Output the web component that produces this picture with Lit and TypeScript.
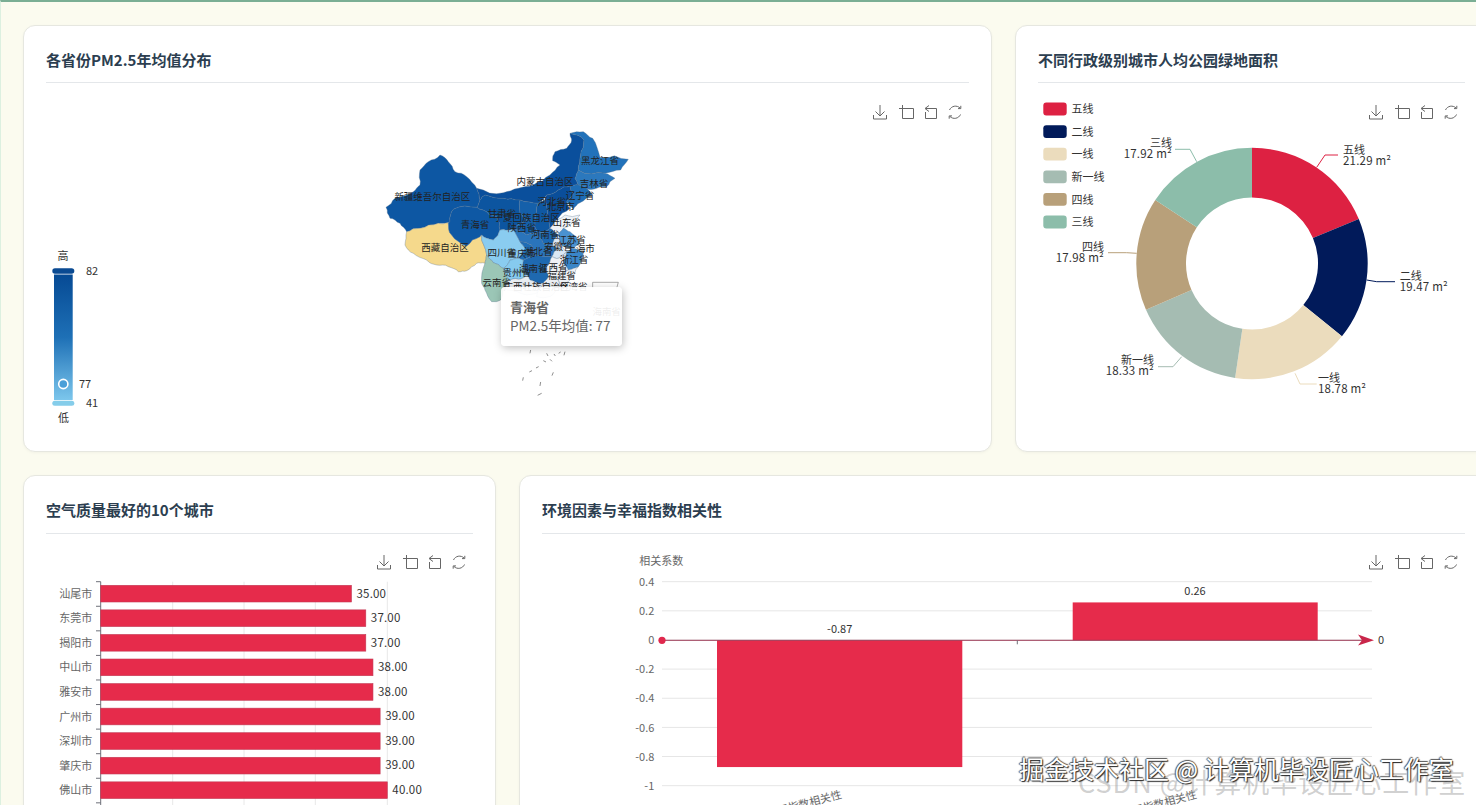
import { LitElement, html, svg, css } from "lit";
import { customElement } from "lit/decorators.js";

const RED = "#e62b4b";

// outlines traced at 3x, the group below scales them back down
const provinces: [string, string][] = [
  ["#0d57a3", "48,262 75,235 105,228 130,215 150,195 150,150 175,125 210,105 235,125 255,155 290,170 320,205 330,240 320,262 250,268 240,305 205,310 150,325 110,335 90,310 60,295"],
  ["#f5d98c", "110,335 150,325 205,310 235,308 245,345 290,378 330,350 335,345 350,405 345,430 320,430 290,452 265,455 235,440 200,435 170,420 130,400 105,375"],
  ["#0e58a4", "250,268 320,262 340,270 380,290 390,330 370,360 335,345 330,350 290,378 245,345 235,308 240,305"],
  ["#0a4f9c", "320,205 400,218 445,205 490,195 540,165 570,135 548,122 555,95 590,85 605,60 600,40 642,60 632,105 625,150 615,175 625,195 600,198 565,210 530,225 505,250 450,240 400,235 345,225 330,240"],
  ["#2272ba", "600,40 640,35 668,55 690,112 775,118 752,150 705,160 625,150 632,105 642,60"],
  ["#2b78bd", "625,150 705,160 735,175 710,200 680,205 650,205 625,195 615,175"],
  ["#1f6db5", "600,198 625,195 650,205 668,225 630,248 610,268 590,245 610,225"],
  ["#0a4e9a", "530,225 565,210 600,198 610,225 590,245 600,265 560,300 540,325 530,290 525,240"],
  ["#0f58a2", "505,250 525,240 530,290 540,325 500,340 495,300"],
  ["#0c55a0", "320,262 330,240 345,225 400,235 450,240 450,280 470,300 430,330 390,330 380,290 340,270"],
  ["#1560aa", "450,240 505,250 495,300 500,340 470,345 430,330 470,300 450,280"],
  ["#8accf0", "335,345 370,360 390,330 430,330 450,365 465,385 445,415 420,420 400,445 370,428 350,405"],
  ["#1f6db5", "450,365 485,375 490,405 460,420 445,415 465,385"],
  ["#2a74bb", "470,345 500,340 520,370 560,385 545,410 490,405 485,375 450,365 430,330"],
  ["#1d68b0", "500,340 540,325 565,345 545,375 560,385 520,370"],
  ["#eef2f6", "560,300 585,285 630,285 605,310 580,325 565,345 540,325"],
  ["#4a92d0", "565,345 580,325 600,335 630,370 610,385 575,375"],
  ["#dbe8f4", "545,375 565,345 575,375 590,395 565,415 545,410 560,385"],
  ["#3a86c8", "590,395 610,385 640,400 625,440 595,450 580,425"],
  ["#eef1f5", "545,410 565,415 590,395 580,425 595,450 560,475 535,470 530,440"],
  ["#eef1f5", "595,450 625,440 600,480 575,500 560,475"],
  ["#1f69b0", "490,405 545,410 530,440 535,470 520,490 480,480 470,465 460,440 460,420"],
  ["#86caef", "400,445 420,420 445,415 460,420 460,440 470,465 445,478 415,482"],
  ["#9bc6b6", "345,430 350,405 370,428 400,445 415,482 400,505 392,540 365,545 345,510 335,490"],
  ["#e8edf2", "415,482 445,478 470,465 480,480 520,490 515,510 470,525 410,510"],
  ["#eceff3", "520,490 535,470 560,475 575,500 540,530 500,530"],
];

const provinceLabels: [string, number, number][] = [
  ["黑龙江省", 690, 120], ["吉林省", 672, 188], ["内蒙古自治区", 525, 183], ["辽宁省", 630, 226],
  ["新疆维吾尔自治区", 187, 228], ["青海省", 315, 313], ["西藏自治区", 225, 382], ["甘肃省", 395, 278],
  ["宁夏回族自治区", 470, 290], ["河北省", 545, 242], ["北京市", 572, 258], ["陕西省", 455, 322],
  ["山东省", 590, 305], ["河南省", 525, 342], ["江苏省", 605, 358], ["上海市", 632, 385],
  ["安徽省", 565, 378], ["湖北省", 505, 393], ["重庆市", 455, 400], ["四川省", 395, 395],
  ["浙江省", 612, 417], ["江西省", 550, 440], ["湖南省", 490, 445], ["贵州省", 440, 455],
  ["福建省", 575, 465], ["云南省", 380, 485], ["广西壮族自治区", 500, 497], ["台湾省", 610, 497],
  ["海南省", 710, 572],
];

const islands = [
  "482,690 480,700", "460,772 458,782", "585,695 582,706", "550,757 546,767", "512,786 510,798",
  "515,820 503,826", "530,700 534,708", "552,702 556,708", "520,722 528,726", "540,718 546,724",
  "478,756 486,752", "498,744 506,740", "566,700 572,696",
];

const pieData = [
  { name: "五线", value: 21.29, color: "#dd2142", line: "1316.7,167.3 1325,155 1338,155", x: 1343, y: 148.5, anchor: "start" },
  { name: "二线", value: 19.47, color: "#011a5a", line: "1366.7,280 1376.7,281.7 1395,281.7", x: 1399.7, y: 275, anchor: "start" },
  { name: "一线", value: 18.78, color: "#ebdcbd", line: "1295,373.3 1300,384 1316.7,384", x: 1318, y: 377, anchor: "start" },
  { name: "新一线", value: 18.33, color: "#a5bcb2", line: "1181.7,356.7 1173,366.7 1158,366.7", x: 1154, y: 359, anchor: "end" },
  { name: "四线", value: 17.98, color: "#b8a07a", line: "1136.7,253.3 1126.7,252.7 1108,252.7", x: 1104, y: 246, anchor: "end" },
  { name: "三线", value: 17.92, color: "#8cbdaa", line: "1196.7,161.7 1190,149.3 1175,149.3", x: 1172, y: 142, anchor: "end" },
];

const cities: [string, number][] = [
  ["汕尾市", 35], ["东莞市", 37], ["揭阳市", 37], ["中山市", 38], ["雅安市", 38],
  ["广州市", 39], ["深圳市", 39], ["肇庆市", 39], ["佛山市", 40],
];

const corrTicks = ["0.4", "0.2", "0", "-0.2", "-0.4", "-0.6", "-0.8", "-1"];

// roughen an edge the same way from both sides so neighbours still share it
function roughEdge(a: number[], b: number[], depth: number): number[][] {
  if (depth === 0) return [];
  const seed = (a[0] + b[0]) * 12.9898 + (a[1] + b[1]) * 78.233;
  const n = Math.sin(seed) * 43758.5453;
  const off = (n - Math.floor(n) - 0.5) * 0.22;
  const flip = a[0] < b[0] || (a[0] === b[0] && a[1] < b[1]) ? 1 : -1;
  const mid = [
    (a[0] + b[0]) / 2 - (b[1] - a[1]) * off * flip,
    (a[1] + b[1]) / 2 + (b[0] - a[0]) * off * flip,
  ];
  return [...roughEdge(a, mid, depth - 1), mid, ...roughEdge(mid, b, depth - 1)];
}

function rough(points: string) {
  const pts = points.split(" ").map((p) => p.split(",").map(Number));
  return pts
    .flatMap((p, i) => [p, ...roughEdge(p, pts[(i + 1) % pts.length], 2)])
    .map((p) => p.join(","))
    .join(" ");
}

function slice(a0: number, a1: number, r0: number, r1: number) {
  const cx = 1252, cy = 263.5;
  const pt = (a: number, r: number) => `${cx + r * Math.sin(a)} ${cy - r * Math.cos(a)}`;
  const large = a1 - a0 > Math.PI ? 1 : 0;
  return `M${pt(a0, r1)}A${r1} ${r1} 0 ${large} 1 ${pt(a1, r1)}L${pt(a1, r0)}A${r0} ${r0} 0 ${large} 0 ${pt(a0, r0)}Z`;
}

const toolbox = () => html`
  <div class="toolbox">
    <svg width="91" height="15" viewBox="0 0 91 15" fill="none" stroke="#666" stroke-width="1">
      <path d="M7 0V11M2.5 6.5L7 11L11.5 6.5M.5 10V14H13.5V10" />
      <path d="M29.5 0V13.5H40.5V3.5H26" />
      <path d="M56 .5L52 3.5L56 6.5M52.5 3.5H63.5V13.5H52.5V7" />
      <path d="M76.5 5A6.5 6.5 0 0 1 87 3M87.8 .8V3.6H85M87.5 9.5A6.5 6.5 0 0 1 77 11.5M76.2 13.7V10.9H79" />
    </svg>
  </div>
`;

@customElement("app-root")
export class AppRoot extends LitElement {
  static styles = css`
    :host {
      display: block;
      position: relative;
      width: 1476px;
      height: 805px;
      overflow: hidden;
      background: #fbfbef;
      font-family: "Noto Sans CJK SC", "Noto Sans", sans-serif;
      box-sizing: border-box;
      border-top: 2px solid #7aae94;
      border-left: 1px solid #dcf0e0;
    }

    .grid {
      display: grid;
      grid-template-columns: repeat(3, 473px);
      grid-auto-rows: 427px;
      gap: 23px;
      padding: 23px 0 0 22px;
    }

    .card {
      display: flex;
      flex-direction: column;
      box-sizing: border-box;
      background: #fff;
      border: 1px solid #e6e7e0;
      border-radius: 12px;
      padding: 0 22px;
      box-shadow: 0 1px 3px rgba(0, 0, 0, 0.04);
    }

    .wide {
      grid-column: span 2;
    }

    .title {
      font-size: 15px;
      font-weight: 700;
      line-height: 22px;
      color: #2c3e50;
      padding: 23px 0 11px;
      border-bottom: 1px solid #e4e7ea;
    }

    .low .title {
      padding-bottom: 12px;
    }

    .chart {
      position: relative;
      flex: 1;
      min-height: 0;
    }

    .chart > svg.plot {
      display: block;
      width: 100%;
      height: 100%;
      overflow: visible;
    }

    .toolbox {
      position: absolute;
      top: 22px;
      right: 5px;
      line-height: 0;
    }

    .low .toolbox {
      top: 21px;
    }

    text {
      font-family: "Noto Sans CJK SC", "Noto Sans", sans-serif;
      font-size: 11px;
      fill: #333;
      dominant-baseline: central;
    }

    .muted {
      fill: #666;
    }

    .num {
      font-size: 11.5px;
      letter-spacing: 0.2px;
    }

    .map-label {
      font-size: 28.5px;
      text-anchor: middle;
      fill: #222;
    }

    .tooltip {
      position: absolute;
      left: 455px;
      top: 204px;
      width: 121px;
      height: 59px;
      box-sizing: border-box;
      padding: 10px 9px;
      background: rgba(255, 255, 255, 0.92);
      border-radius: 4px;
      box-shadow: 1px 2px 8px rgba(0, 0, 0, 0.25);
      font-size: 13.5px;
      line-height: 19px;
      color: #666;
      white-space: nowrap;
    }

    .tooltip b {
      display: block;
      font-size: 13px;
      font-weight: 700;
    }

    .mark {
      position: absolute;
      white-space: nowrap;
      pointer-events: none;
    }

    .mark-back {
      left: 1077px;
      top: 762px;
      font-size: 27px;
      line-height: 36px;
      letter-spacing: 1px;
      color: rgba(150, 150, 150, 0.45);
    }

    .mark-front {
      left: 1018px;
      top: 749px;
      font-size: 25px;
      line-height: 34px;
      color: #fff;
      text-shadow: 1px 1px 1px #222, -1px 0 1px #555, 0 -1px 1px #555;
    }
  `;

  private mapChart() {
    return html`
      <div class="chart">
        <svg class="plot" viewBox="46 83 923 368">
          <defs>
            <linearGradient id="vm" x1="0" y1="0" x2="0" y2="1">
              <stop offset="0" stop-color="#064a94" />
              <stop offset="0.5" stop-color="#1e70b6" />
              <stop offset="1" stop-color="#7cc6ec" />
            </linearGradient>
          </defs>
          <text x="63" y="254.5" text-anchor="middle">高</text>
          <rect x="52.3" y="268.3" width="22" height="5.5" rx="2.7" fill="#0a4a92" />
          <rect x="54" y="274.5" width="18.7" height="125.5" fill="url(#vm)" />
          <rect x="52.3" y="400.7" width="22" height="5" rx="2.5" fill="#85cdea" />
          <circle cx="63.3" cy="384" r="4.6" fill="#4a9fd8" stroke="#fff" stroke-width="1.6" />
          <text x="63.5" y="417" text-anchor="middle">低</text>
          <text x="86" y="269.5">82</text>
          <text x="79" y="382.5">77</text>
          <text x="86" y="401.5">41</text>
          <g transform="translate(370 120) scale(.3333)">
            ${provinces.map(
              ([fill, points]) => svg`<polygon points=${rough(points)} fill=${fill} stroke="#56708c" stroke-width="1" stroke-linejoin="round" />`
            )}
            <path d="M668 505V487H745L740 505" fill="none" stroke="#555" stroke-width="1.5" />
            ${islands.map(
              (points) => svg`<polyline points=${points} fill="none" stroke="#555" stroke-width="2" />`
            )}
            ${provinceLabels.map(
              ([name, x, y]) => svg`<text class="map-label" x=${x} y=${y}>${name}</text>`
            )}
          </g>
        </svg>
        ${toolbox()}
        <div class="tooltip"><b>青海省</b>PM2.5年均值: 77</div>
      </div>
    `;
  }

  private pieChart() {
    const total = pieData.reduce((s, d) => s + d.value, 0);
    let angle = 0;
    return html`
      <div class="chart">
        <svg class="plot" viewBox="1038 83 427 368">
          ${pieData.map((d, i) => {
            const y = 109 + i * 22.6;
            return svg`
              <rect x="1043.3" y=${y - 6.4} width="23.4" height="12.8" rx="3" fill=${d.color} />
              <text x="1071.5" y=${y - 0.8}>${d.name}</text>
            `;
          })}
          ${pieData.map((d) => {
            const a0 = angle;
            angle += (d.value / total) * Math.PI * 2;
            return svg`<path d=${slice(a0, angle, 66, 115.7)} fill=${d.color} />`;
          })}
          ${pieData.map(
            (d) => svg`
              <polyline points=${d.line} fill="none" stroke=${d.color} stroke-width="1" />
              <text x=${d.x} y=${d.y} text-anchor=${d.anchor}>${d.name}</text>
              <text class="num" x=${d.x} y=${d.y + 11} text-anchor=${d.anchor}>${d.value} m²</text>
            `
          )}
        </svg>
        ${toolbox()}
      </div>
    `;
  }

  private barChart() {
    const top = 581.7;
    const step = 24.57;
    return html`
      <div class="chart">
        <svg class="plot" viewBox="46 534 427 367">
          ${[172.7, 244, 315.3, 387.3].map(
            (x) => svg`<line x1=${x} x2=${x} y1=${top} y2="830" stroke="#e8e8e8" />`
          )}
          <line x1="100.7" x2="100.7" y1=${top} y2="830" stroke="#6e7079" />
          ${[...cities, null].map(
            (_, i) => svg`<line x1="96" x2="100.7" y1=${top + i * step} y2=${top + i * step} stroke="#6e7079" />`
          )}
          ${cities.map(([name, value], i) => {
            const y = top + 3.6 + i * step;
            const w = value * 7.165;
            return svg`
              <text class="muted" x="92.3" y=${y + 7.4} text-anchor="end">${name}</text>
              <rect x="100.7" y=${y} width=${w} height="16.7" fill=${RED} stroke="#c23a55" stroke-width=".6" />
              <text class="num" x=${100.7 + w + 5} y=${y + 7.2}>${value.toFixed(2)}</text>
            `;
          })}
        </svg>
        ${toolbox()}
      </div>
    `;
  }

  private corrChart() {
    const zero = 640.3;
    const perUnit = 145.7;
    return html`
      <div class="chart">
        <svg class="plot" viewBox="542 534 923 367">
          <text class="muted" x="639.3" y="560">相关系数</text>
          ${corrTicks.map((label, i) => {
            const y = 581.7 + i * 29.14;
            return svg`
              <line x1="662" x2="1372" y1=${y} y2=${y} stroke="#e6e6e6" />
              <text class="muted" x="654.3" y=${y - 0.8} text-anchor="end">${label}</text>
            `;
          })}
          <rect x="717" y=${zero} width="245.3" height=${0.87 * perUnit} fill=${RED} />
          <rect x="1072.7" y=${zero - 0.26 * perUnit} width="245" height=${0.26 * perUnit} fill=${RED} />
          <line x1="662" x2="1366" y1=${zero} y2=${zero} stroke="#9c3a55" />
          <line x1="1017.3" x2="1017.3" y1=${zero} y2=${zero + 4} stroke="#6e7079" />
          <circle cx="662" cy=${zero} r="3.6" fill="#e0284d" />
          <path d="M1358 634.5L1374 ${zero}L1358 645.5L1362 ${zero}Z" fill="#c9264a" />
          <text x="1378" y="638.5">0</text>
          <text x="839.7" y="627.8" text-anchor="middle">-0.87</text>
          <text x="1195" y="589.5" text-anchor="middle">0.26</text>
          <text class="muted" transform="translate(841 793) rotate(-15)" text-anchor="end">PM2.5与幸福指数相关性</text>
          <text class="muted" transform="translate(1196 793) rotate(-15)" text-anchor="end">人均绿地与幸福指数相关性</text>
        </svg>
        ${toolbox()}
      </div>
    `;
  }

  render() {
    return html`
      <div class="grid">
        <section class="card wide">
          <div class="title">各省份PM2.5年均值分布</div>
          ${this.mapChart()}
        </section>
        <section class="card">
          <div class="title">不同行政级别城市人均公园绿地面积</div>
          ${this.pieChart()}
        </section>
        <section class="card low">
          <div class="title">空气质量最好的10个城市</div>
          ${this.barChart()}
        </section>
        <section class="card wide low">
          <div class="title">环境因素与幸福指数相关性</div>
          ${this.corrChart()}
        </section>
      </div>
      <div class="mark mark-back">CSDN @计算机毕设匠心工作室</div>
      <div class="mark mark-front">掘金技术社区 @ 计算机毕设匠心工作室</div>
    `;
  }
}
